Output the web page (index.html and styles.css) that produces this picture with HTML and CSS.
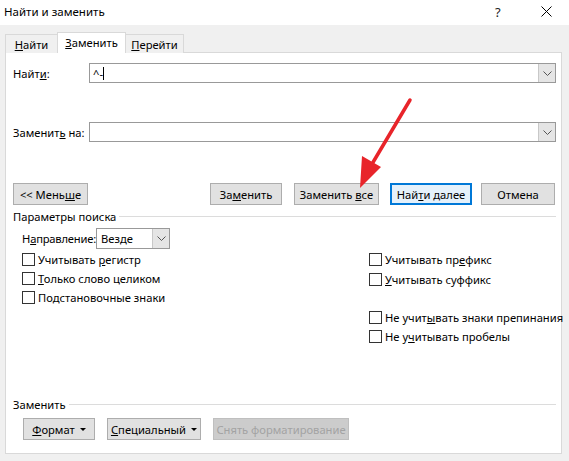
FILE: index.html
```html
<!DOCTYPE html>
<html lang="ru">
<head>
<meta charset="utf-8">
<title>Найти и заменить</title>
<link rel="stylesheet" href="styles.css">
</head>
<body>
<div class="window">
  <div class="titlebar">
    <span class="title">Найти и заменить</span>
    <span class="help">?</span>
    <span class="close"><svg width="11" height="11" viewBox="0 0 11 11"><path d="M0.5 0.5L10.5 10.5M10.5 0.5L0.5 10.5" stroke="#000" stroke-width="1"/></svg></span>
  </div>
  <div class="dialog">
    <div class="tabs">
      <div class="tab"><span><u>Н</u>айти</span></div>
      <div class="tab active"><span><u>З</u>аменить</span></div>
      <div class="tab"><span><u>П</u>ерейти</span></div>
    </div>
    <div class="panel">
      <div class="field-row first">
        <span class="field-label">Найт<u>и</u>:</span>
        <div class="combo">
          <span class="combo-text"><span>^-</span><span class="caret"></span></span>
          <span class="combo-btn"><svg width="9" height="5" viewBox="0 0 9 5"><path d="M0.5 0.5L4.5 4.5L8.5 0.5" fill="none" stroke="#555" stroke-width="1"/></svg></span>
        </div>
      </div>
      <div class="field-row second">
        <span class="field-label">Заменит<u>ь</u> на:</span>
        <div class="combo">
          <span class="combo-text"></span>
          <span class="combo-btn"><svg width="9" height="5" viewBox="0 0 9 5"><path d="M0.5 0.5L4.5 4.5L8.5 0.5" fill="none" stroke="#555" stroke-width="1"/></svg></span>
        </div>
      </div>
      <div class="button-row">
        <button class="btn btn-less"><span>&lt;&lt; Мень<u>ш</u>е</span></button>
        <div class="button-group">
          <button class="btn btn-replace"><span>За<u>м</u>енить</span></button>
          <button class="btn btn-all"><span>Заменить <u>в</u>се</span></button>
          <button class="btn btn-next"><span>Най<u>т</u>и далее</span></button>
          <button class="btn btn-cancel"><span>Отмена</span></button>
        </div>
      </div>
      <div class="group-header params"><span>Параметры поиска</span><span class="rule"></span></div>
      <div class="options">
        <div class="col-left">
          <div class="direction">
            <span class="dir-label">Н<u>а</u>правление:</span>
            <div class="select">
              <span class="select-text">Везде</span>
              <span class="combo-btn"><svg width="9" height="5" viewBox="0 0 9 5"><path d="M0.5 0.5L4.5 4.5L8.5 0.5" fill="none" stroke="#555" stroke-width="1"/></svg></span>
            </div>
          </div>
          <label class="check"><span class="box"></span><span class="text">Учитывать <u>р</u>егистр</span></label>
          <label class="check"><span class="box"></span><span class="text"><u>Т</u>олько слово целиком</span></label>
          <label class="check"><span class="box"></span><span class="text">Подстановочные знаки</span></label>
        </div>
        <div class="col-right">
          <label class="check"><span class="box"></span><span class="text">Учитывать пр<u>е</u>фикс</span></label>
          <label class="check"><span class="box"></span><span class="text"><u>У</u>читывать суффикс</span></label>
          <label class="check gap"><span class="box"></span><span class="text">Не учит<u>ы</u>вать знаки препинания</span></label>
          <label class="check"><span class="box"></span><span class="text">Не у<u>ч</u>итывать пробелы</span></label>
        </div>
      </div>
      <div class="group-header replace"><span>Заменить</span><span class="rule"></span></div>
      <div class="format-row">
        <button class="btn btn-format"><span><u>Ф</u>ормат</span><span class="tri"></span></button>
        <button class="btn btn-special"><span><u>С</u>пециальный</span><span class="tri"></span></button>
        <button class="btn btn-disabled"><span>Снять форматирование</span></button>
      </div>
    </div>
  </div>
  <svg class="arrow" width="569" height="461" viewBox="0 0 569 461">
    <path d="M410 100L372 164" stroke="#e8242a" stroke-width="3.5" stroke-linecap="round"/>
    <path d="M360 188L362 156L381 167Z" fill="#e8242a"/>
  </svg>
</div>
</body>
</html>
```

FILE: styles.css
```css
* { box-sizing: border-box; }
html, body { margin: 0; padding: 0; }
body {
  width: 569px;
  height: 461px;
  overflow: hidden;
  background: #f0f0f0;
  font-family: "Noto Sans", "Segoe UI", sans-serif;
  font-size: 11.2px;
  color: #000;
  white-space: nowrap;
}
u { text-decoration: underline; text-underline-offset: 1px; }
.window { position: relative; width: 569px; height: 461px; }
.titlebar {
  height: 25px;
  background: #fff;
  display: flex;
  align-items: center;
  padding-left: 4px;
}
.title { flex: 1; font-size: 11.5px; margin-top: -2px; }
.help { width: 12px; margin-right: 34px; font-size: 13px; color: #222; margin-top: -2px; }
.close { width: 11px; margin-right: 17px; display: flex; margin-top: -2px; }

.dialog { padding: 6px 7px 0 5px; }
.tabs { display: flex; height: 21px; align-items: flex-end; }
.tab {
  height: 19px;
  border: 1px solid #d9d9d9;
  border-bottom: none;
  background: #f0f0f0;
  display: flex;
  align-items: center;
  justify-content: center;
  margin-bottom: -1px;
  position: relative;
}
.tab:first-child { width: 53px; }
.tab + .tab { margin-left: -1px; }
.tab.active {
  height: 21px;
  width: 69px;
  background: #fff;
  z-index: 1;
  padding-bottom: 2px;
}
.tab:last-child { width: 59px; }
.panel {
  height: 402px;
  border: 1px solid #d9d9d9;
  background: #fff;
  padding: 0 5px 0 7px;
  display: flex;
  flex-direction: column;
}
.field-row { display: flex; align-items: center; height: 20px; }
.field-row.first { margin-top: 10px; }
.field-row.second { margin-top: 39px; }
.field-label { width: 76px; flex: none; }
.combo {
  flex: 1;
  height: 20px;
  border: 1px solid #999;
  display: flex;
  align-items: stretch;
  background: #fff;
}
.combo-text { flex: 1; padding-left: 3px; display: flex; align-items: center; }
.caret { display: inline-block; width: 1px; height: 13px; background: #000; }
.combo-btn {
  width: 17px;
  background: #e5e5e5;
  border-left: 1px solid #c8c8c8;
  display: flex;
  align-items: center;
  justify-content: center;
}
.button-row { display: flex; margin-top: 41px; height: 22px; }
.button-group { display: flex; margin-left: auto; }
.btn {
  font: inherit;
  color: #000;
  height: 22px;
  background: #e1e1e1;
  border: 1px solid #adadad;
  padding: 0;
  display: flex;
  align-items: center;
  justify-content: center;
  border-radius: 0;
  white-space: nowrap;
}
.btn-less { width: 75px; }
.btn-replace { width: 72px; }
.btn-all { width: 85px; margin-left: 12px; }
.btn-next {
  width: 82px;
  margin-left: 11px;
  border: 2px solid #0078d7;
  background: #e5f1fb;
}
.btn-cancel { width: 74px; margin-left: 9px; margin-right: 1px; }

.group-header { display: flex; align-items: center; height: 14px; }
.group-header .rule { flex: 1; height: 1px; background: #dcdcdc; margin-left: 3px; margin-top: 1px; }
.params { margin-top: 4px; }
.options { display: flex; }
.col-left { width: 356px; flex: none; padding-left: 9px; }
.direction { display: flex; align-items: center; height: 21px; margin-top: 5px; }
.dir-label { flex: none; width: 74px; letter-spacing: -0.2px; }
.select {
  width: 74px;
  height: 21px;
  border: 1px solid #999;
  display: flex;
  align-items: stretch;
}
.select-text { flex: 1; padding-left: 4px; display: flex; align-items: center; }
.check { display: flex; align-items: center; height: 19px; }
.box {
  width: 13px;
  height: 13px;
  flex: none;
  border: 1px solid #333;
  background: #fff;
  margin-right: 3px;
}
.col-left .check:nth-of-type(1) { margin-top: 1px; }
.col-right { padding-top: 27px; }
.col-right .check:nth-of-type(2) { margin-top: 1px; }
.check.gap { margin-top: 19px; }

.replace { margin-top: 51px; }
.format-row { display: flex; padding-left: 10px; margin-top: 7px; }
.btn-format { width: 72px; }
.btn-special { width: 94px; margin-left: 12px; }
.btn-disabled {
  width: 136px;
  margin-left: 12px;
  background: #cccccc;
  border-color: #bfbfbf;
  color: #a3a3a3;
}
.tri {
  display: inline-block;
  width: 0;
  height: 0;
  border-left: 3px solid transparent;
  border-right: 3px solid transparent;
  border-top: 3px solid #000;
  margin-left: 5px;
  margin-top: 1px;
}
.arrow { position: absolute; left: 0; top: 0; pointer-events: none; }
```
